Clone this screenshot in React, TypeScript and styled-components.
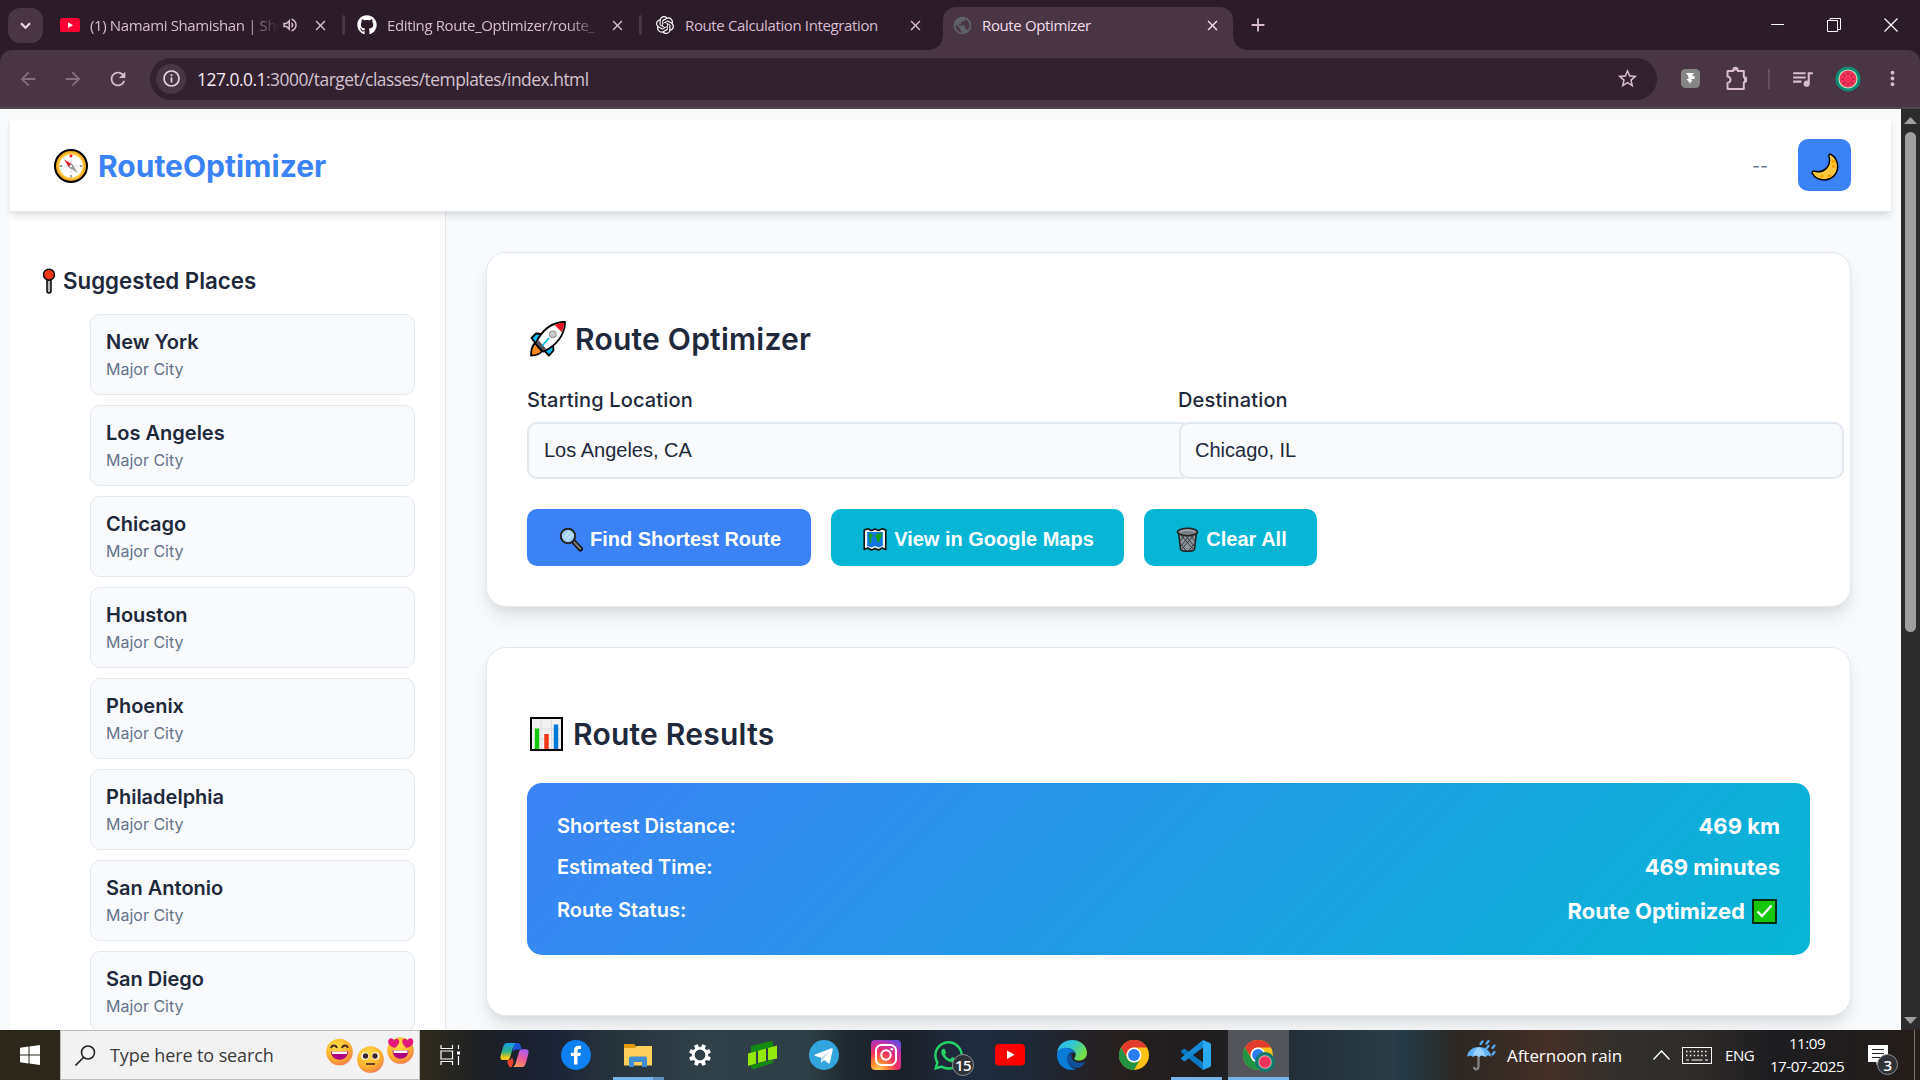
import React from 'react';
import styled, { createGlobalStyle, css } from 'styled-components';
import { FaGithub, FaWhatsapp } from 'react-icons/fa';
import { SiOpenai } from 'react-icons/si';
import {
  MdArrowBack,
  MdArrowForward,
  MdRefresh,
  MdStarBorder,
  MdQueueMusic,
  MdMoreVert,
  MdPublic,
  MdOutlineVolumeUp,
  MdClose,
  MdAdd,
} from 'react-icons/md';

const GlobalStyle = createGlobalStyle`
  * { box-sizing: border-box; }
  html, body { margin: 0; padding: 0; overflow: hidden; background: #f8fafc; }
  button, input { font-family: inherit; margin: 0; }
  svg { display: block; flex: none; }
`;

const inter = css`font-family: Inter, 'Liberation Sans', sans-serif;`;
const ui = css`font-family: 'Open Sans', 'Noto Sans', sans-serif;`;
const arial = css`font-family: 'Liberation Sans', Arial, sans-serif;`;

const Screen = styled.div`
  width: 1920px;
  height: 1080px;
  display: flex;
  flex-direction: column;
  overflow: hidden;
`;

/* ---------- browser chrome ---------- */

const TabStrip = styled.div`
  ${ui}
  height: 50px;
  flex: none;
  display: flex;
  background: #2c1b29;
  color: #d9bcd2;
`;

const TabSearch = styled.div`
  width: 35px;
  height: 35px;
  margin: 8px 5px 0 8px;
  border-radius: 12px;
  background: #4a3545;
  display: flex;
  align-items: center;
  justify-content: center;
`;

const Tab = styled.div`
  width: 297px;
  height: 50px;
  padding-left: 12px;
  display: flex;
  align-items: center;
`;

const ActiveTab = styled(Tab)`
  position: relative;
  width: 290px;
  height: 43px;
  margin: 7px 0 0 4px;
  padding: 0 0 7px 8px;
  border-radius: 13px 13px 0 0;
  background: #4a3545;
  color: #f3dfee;
  &::before,
  &::after {
    content: '';
    position: absolute;
    bottom: 0;
    width: 14px;
    height: 14px;
  }
  &::before {
    left: -14px;
    background: radial-gradient(circle at 0 0, transparent 13.5px, #4a3545 14px);
  }
  &::after {
    right: -14px;
    background: radial-gradient(circle at 100% 0, transparent 13.5px, #4a3545 14px);
  }
`;

const Favicon = styled.div<{ $wide?: boolean }>`
  width: ${p => (p.$wide ? 22 : 20)}px;
  height: 20px;
  margin-right: ${p => (p.$wide ? 9 : 10)}px;
  display: flex;
  align-items: center;
  justify-content: center;
`;

const TabTitle = styled.div<{ $w: number; $fade?: boolean }>`
  width: ${p => p.$w}px;
  font-size: 15px;
  line-height: 24px;
  letter-spacing: -0.37px;
  white-space: nowrap;
  ${p => p.$fade && 'mask-image: linear-gradient(90deg, #000 calc(100% - 34px), transparent);'}
`;

const TabClose = styled.div<{ $ml: number }>`
  margin-left: ${p => p.$ml}px;
  width: 17px;
  height: 17px;
`;

const TabRule = styled.div`
  width: 3px;
  height: 20px;
  border-radius: 2px;
  margin-left: auto;
  background: #4a3545;
`;

const NewTab = styled.div`
  width: 22px;
  margin-left: 14px;
  display: flex;
  align-items: center;
`;

const WindowButtons = styled.div`
  margin-left: auto;
  padding-right: 22px;
  display: flex;
  align-items: center;
  gap: 43px;
`;

const Toolbar = styled.div`
  ${ui}
  height: 59px;
  flex: none;
  background: #2c1b29;
`;

const ToolbarFace = styled.div`
  height: 59px;
  border-radius: 12px 12px 0 0;
  border-bottom: 2px solid #4f4650;
  background: #4a3545;
  color: #d9bcd2;
  display: flex;
  align-items: center;
`;

const NavIcon = styled.div<{ $dim?: boolean; $mr: number }>`
  width: 22px;
  margin-right: ${p => p.$mr}px;
  opacity: ${p => (p.$dim ? 0.42 : 1)};
`;

const Omnibox = styled.div`
  width: 1507px;
  height: 42px;
  border-radius: 21px;
  background: #332130;
  display: flex;
  align-items: center;
  padding: 0 18px 0 6px;
`;

const InfoDot = styled.div`
  width: 30px;
  height: 30px;
  border-radius: 50%;
  background: #4a3545;
  display: flex;
  align-items: center;
  justify-content: center;
`;

const Url = styled.div`
  margin-left: 11px;
  padding-top: 1px;
  flex: 1;
  font-size: 17.4px;
  line-height: 28px;
  letter-spacing: -0.49px;
  color: #d3c4cf;
  span { color: #f6e9f2; }
`;

const ExtRow = styled.div`
  flex: 1;
  display: flex;
  align-items: center;
  padding-left: 24px;
`;

const Gap = styled.div<{ $w: number }>`
  width: ${p => p.$w}px;
`;

const ToolRule = styled.div`
  width: 2px;
  height: 20px;
  background: #66505f;
`;

/* ---------- page ---------- */

const Viewport = styled.div`
  height: 921px;
  flex: none;
  display: flex;
  overflow: hidden;
  background: #f8fafc;
`;

const Page = styled.div`
  ${inter}
  width: 1901px;
  padding: 10px 10px 0;
  color: #1e293b;
`;

const Header = styled.header`
  position: relative;
  z-index: 1;
  height: 93px;
  padding: 0 40px 0 43px;
  background: #fff;
  border-bottom: 1px solid #e2e8f0;
  box-shadow: 0 5px 8px -1px rgba(0, 0, 0, 0.1), 0 2px 5px -1px rgba(0, 0, 0, 0.06);
  display: flex;
  align-items: center;
`;

const Brand = styled.div`
  display: flex;
  align-items: center;
  gap: 9px;
  color: #3b82f6;
  font-size: 30px;
  font-weight: 700;
  line-height: 36px;
  padding-top: 2px;
  flex: 1;
`;

const Eta = styled.div`
  font-size: 17.5px;
  color: #64748b;
  margin-right: 30px;
`;

const ThemeButton = styled.button`
  width: 53px;
  height: 52px;
  padding: 3px 0 0;
  border: 0;
  border-radius: 10px;
  background: #3b82f6;
  display: flex;
  align-items: center;
  justify-content: center;
`;

const Columns = styled.div`
  display: flex;
`;

const Sidebar = styled.aside`
  width: 436px;
  height: 830px;
  padding: 54px 30px 0 32px;
  background: #fff;
  border-right: 1px solid #e2e8f0;
`;

const SideTitle = styled.h3`
  margin: 0 0 18px;
  height: 30px;
  display: flex;
  align-items: center;
  gap: 7px;
  font-size: 22.3px;
  font-weight: 600;
  line-height: 30px;
`;

const PlaceList = styled.ul`
  margin: 0;
  padding: 0 0 0 48px;
  list-style: none;
`;

const Place = styled.li`
  height: 81px;
  margin-bottom: 10px;
  padding: 13px 15px;
  border: 1px solid #e2e8f0;
  border-radius: 10px;
  background: #f8fafc;
`;

const PlaceName = styled.div`
  font-size: 20px;
  font-weight: 600;
  line-height: 28px;
`;

const PlaceKind = styled.div`
  margin-top: 1px;
  font-size: 16px;
  line-height: 24px;
  color: #64748b;
`;

const Main = styled.main`
  padding: 40px 40px 0;
  flex: 1;
`;

const Card = styled.section<{ $h: number }>`
  height: ${p => p.$h}px;
  margin-bottom: 40px;
  padding: 68px 40px 0;
  border: 1px solid #e2e8f0;
  border-radius: 20px;
  background: #fff;
  box-shadow: 0 12px 19px -3px rgba(0, 0, 0, 0.1), 0 5px 8px -2px rgba(0, 0, 0, 0.05);
`;

const CardTitle = styled.h2<{ $gap: number; $mb: number }>`
  margin: 0 0 ${p => p.$mb}px;
  height: 36px;
  display: flex;
  align-items: center;
  gap: ${p => p.$gap}px;
  font-size: 30px;
  font-weight: 600;
  letter-spacing: 0.24px;
  line-height: 36px;
  padding-left: 3px;
`;

const Fields = styled.div`
  display: grid;
  grid-template-columns: 652px 631px;
`;

const FieldLabel = styled.label<{ $shift?: boolean }>`
  display: block;
  height: 30px;
  margin: 0 0 7px ${p => (p.$shift ? -1 : 0)}px;
  font-size: 20px;
  font-weight: 500;
  letter-spacing: 0.15px;
  line-height: 30px;
`;

const FieldInput = styled.input<{ $pl: number }>`
  ${arial}
  display: block;
  width: 665px;
  height: 57px;
  padding: 0 15px 0 ${p => p.$pl}px;
  border: 2px solid #e2e8f0;
  border-radius: 10px;
  background: #f8fafc;
  color: #1e293b;
  font-size: 20px;
`;

const Actions = styled.div`
  margin-top: 30px;
  display: flex;
  gap: 20px;
`;

const Action = styled.button<{ $w: number; $accent?: boolean }>`
  ${arial}
  width: ${p => p.$w}px;
  height: 57px;
  padding: 3px 0 0 2px;
  border: 0;
  border-radius: 10px;
  background: ${p => (p.$accent ? '#06b6d4' : '#3b82f6')};
  color: #fff;
  font-size: 20px;
  font-weight: 600;
  display: flex;
  align-items: center;
  justify-content: center;
  gap: 7px;
`;

const Summary = styled.div`
  height: 172px;
  padding: 22px 30px 0;
  border-radius: 15px;
  background: linear-gradient(135deg, #3b82f6, #06b6d4);
  color: #fff;
`;

const SummaryRow = styled.div<{ $h: number }>`
  height: ${p => p.$h}px;
  display: flex;
  align-items: center;
  justify-content: space-between;
  font-size: 20px;
  font-weight: 600;
`;

const SummaryValue = styled.div<{ $pt?: number }>`
  padding-top: ${p => p.$pt ?? 0}px;
  display: flex;
  align-items: center;
  gap: 7px;
  font-size: 22px;
  font-weight: 700;
`;

const ScrollTrack = styled.div`
  width: 19px;
  background: #2c2c2c;
  display: flex;
  flex-direction: column;
  align-items: center;
  padding: 8px 0 6px;
`;

const ScrollThumb = styled.div`
  width: 11px;
  height: 500px;
  margin: 8px 0 auto;
  border-radius: 6px;
  background: #9f9f9f;
`;

/* ---------- taskbar ---------- */

const Taskbar = styled.div`
  ${ui}
  height: 50px;
  flex: none;
  display: flex;
  color: #fff;
  background: linear-gradient(90deg, #2c271b 0, #302a1d 420px, #1c2025 485px, #1a2236 550px, #26333c 610px, #2f4048 700px, #2d3e46 810px, #1d282e 850px, #1c2029 900px, #1e2c40 970px, #1e2837 1030px, #272020 1110px, #1f1d1e 1210px, #22303b 1300px, #2a3c47 1390px, #243a47 1405px, #2d2722 1460px, #452f27 1550px, #31302c 1620px, #2e2b29 1700px, #1d1c1f 1770px, #201d1c 1870px, #271d19 1920px);
`;

const Cell = styled.div<{ $w?: number; $active?: boolean }>`
  width: ${p => p.$w ?? 62}px;
  height: 50px;
  position: relative;
  display: flex;
  align-items: center;
  justify-content: center;
  ${p => p.$active && 'background: linear-gradient(90deg, transparent 1px, #53555a 1px);'}
`;

const Underline = styled.div<{ $l: number; $w: number; $soft?: boolean }>`
  position: absolute;
  left: ${p => p.$l}px;
  bottom: 0;
  width: ${p => p.$w}px;
  height: 3px;
  background: ${p => (p.$soft ? '#5e8fbd' : '#76b5ec')};
`;

const SearchBox = styled.div`
  width: 360px;
  height: 50px;
  border: 1px solid #bdbdbd;
  background: #f2f2f2;
  color: #3b3b3b;
  display: flex;
  align-items: center;
  padding: 0 4px 0 14px;
`;

const SearchText = styled.div`
  margin-left: 14px;
  width: 217px;
  font-size: 18px;
  letter-spacing: -0.1px;
  white-space: nowrap;
`;

const CountBadge = styled.div<{ $l: number; $t: number; $s: number }>`
  position: absolute;
  left: ${p => p.$l}px;
  top: ${p => p.$t}px;
  width: ${p => p.$s}px;
  height: ${p => p.$s}px;
  border: 1px solid #8c8f92;
  border-radius: 50%;
  background: #2f3337;
  font-size: 15px;
  font-weight: 600;
  letter-spacing: -0.6px;
  display: flex;
  align-items: center;
  justify-content: center;
`;

const Tray = styled.div`
  margin-left: auto;
  display: flex;
  align-items: center;
`;

const Weather = styled.div`
  width: 146px;
  margin-left: 10px;
  font-size: 17px;
  letter-spacing: -0.05px;
  white-space: nowrap;
`;

const Lang = styled.div`
  width: 40px;
  margin-left: 13px;
  font-size: 15px;
  letter-spacing: -0.4px;
`;

const Clock = styled.div`
  width: 84px;
  font-size: 15.2px;
  line-height: 23px;
  letter-spacing: -0.5px;
  text-align: center;
  white-space: nowrap;
`;

const ShowDesktop = styled.div`
  width: 6px;
  height: 50px;
  margin-left: 16px;
  border-left: 1px solid #77706d;
`;

/* ---------- drawings ---------- */

const YouTubeMark = ({ w }: { w: number }) => (
  <svg width={w} height={w * 0.72} viewBox="0 0 30 21.6">
    <rect width="30" height="21.6" rx="4" fill={w > 20 ? '#ff0000' : '#ff0033'} />
    <path d="M12 6.5v8.6l7.600-4.300z" fill="#fff" />
  </svg>
);

const Puzzle = () => (
  <svg width="21" height="25" viewBox="0 0 21 25" fill="none" stroke="currentColor" strokeWidth="2">
    <path d="M1.500 5h5.700c0-4.500 4.600-4.500 4.600 0h6v6.200c3.600 0 3.600 5 0 5V23H1.500v-6c4-1 4-5.500 0-6.500z" strokeLinejoin="round" />
    <path d="M7.200 4.500c0-4 4.600-4 4.600 0zM18 11.400c3 0 3 4.600 0 4.600z" fill="currentColor" stroke="none" />
  </svg>
);

const Compass = () => (
  <svg width="36" height="36" viewBox="0 0 36 36">
    <circle cx="18" cy="18" r="16" fill="#f5a81c" stroke="#000" strokeWidth="2" />
    <circle cx="18" cy="18" r="13.4" fill="#ffc83d" />
    <circle cx="18" cy="18" r="11.6" fill="#fff" />
    <path d="M18 6.6v2.6" stroke="#e81224" strokeWidth="2.6" />
    <path d="M18 27v2.4M6.8 18h2.4M26.8 18h2.4" stroke="#999" strokeWidth="1.8" />
    <path d="M18 11v14M11 18h14" stroke="#ddd" strokeWidth="1" />
    <path d="M11 11.500l8.500 5-3.200 3.200z" fill="#e81224" />
    <path d="M19.500 16.500l5.500 8.500-8.700-5.300z" fill="#9a9a9a" />
    <circle cx="18" cy="18.200" r="1.700" fill="#fff" stroke="#777" strokeWidth="0.800" />
  </svg>
);

const Pin = () => (
  <svg width="14" height="26" viewBox="0 0 14 26">
    <path d="M5 11h4v12a2 2 0 0 1-4 0z" fill="#b8b8b8" stroke="#000" strokeWidth="1.500" />
    <circle cx="7" cy="6.700" r="5.500" fill="#f03a17" stroke="#000" strokeWidth="1.500" />
  </svg>
);

const Rocket = () => (
  <svg width="36" height="36" viewBox="0 0 36 36">
    <g stroke="#000" strokeWidth="1.800" strokeLinejoin="round">
      <path d="M5 22c-3 3-4 7-4 12.500 5 0 8-.8 11-4z" fill="#ff8a1e" />
      <path d="M12 13l-6-.5L1.500 17l5 6.500z" fill="#00bcf2" />
      <path d="M23 23.500l.5 6-4.500 5L13.500 29z" fill="#00bcf2" />
      <path d="M35 1C22 1 12 9 5.500 22.500L13.500 30.500C26 25 35 14 35 1z" fill="#fff" />
    </g>
    <path d="M34.200 1.800c-4 .2-7 1-9.700 2.200l7.400 7.300c1.300-2.900 2.100-6 2.300-9.500z" fill="#e81224" />
    <path d="M6.500 22.500L13.300 29.500l3-1.500-8-9z" fill="#555" />
    <path d="M12 25l7-8" stroke="#00bcf2" strokeWidth="1.800" />
    <circle cx="22.800" cy="13.300" r="3.300" fill="#ccc" stroke="#999" strokeWidth="1.200" />
  </svg>
);

const BarChart = () => (
  <svg width="33" height="34" viewBox="0 0 33 34">
    <rect x="1" y="1" width="31" height="32" fill="#f2f2f2" stroke="#000" strokeWidth="2" />
    <path d="M11 2v30M21.500 2v30M2 12h29M2 22h29" stroke="#ddd" strokeWidth="1" />
    <path d="M7 32V11.500" stroke="#16c60c" strokeWidth="4.500" />
    <path d="M16.500 32V17" stroke="#f03a17" strokeWidth="4.500" />
    <path d="M26 32V7.500" stroke="#0078d7" strokeWidth="4.500" />
  </svg>
);

const Magnifier = () => (
  <svg width="24" height="25" viewBox="0 0 24 25">
    <path d="M14 14l7.500 8" stroke="#111" strokeWidth="5" strokeLinecap="round" />
    <path d="M15 15l6.300 6.800" stroke="#777" strokeWidth="2.200" strokeLinecap="round" />
    <circle cx="9" cy="9" r="7.200" fill="#9fcdf3" stroke="#222" strokeWidth="2" />
    <path d="M5 11l6-6.500M8 13l5.500-6" stroke="#c9e5fb" strokeWidth="1.500" />
  </svg>
);

const WorldMap = () => (
  <svg width="24" height="25" viewBox="0 0 24 25">
    <path d="M1.200 3l3.600-1.200L8.500 3.500 12 2l3.500 1.500 3.700-1.700L22.800 3v19.500L19.200 21l-3.700 2-3.500-1.500L8.500 23l-3.700-2-3.600 1.500z" fill="#f2f2f2" stroke="#111" strokeWidth="1.600" strokeLinejoin="round" />
    <path d="M4.200 5h15.600v14l-4 1.500-3.800-1.500-3.600 1.500-4.200-1.500z" fill="#0f78e0" />
    <path d="M6 7c2-1 4-.2 3.500 2s-2.500 2-1.500 4 .5 2.500-.5 3.500S6 9 6 7zM13.500 7l5-1v4c-1.500 2-2 2-2 4s-2 1.500-2.500-.5.500-2-1-3-.5-2 .5-3.500z" fill="#13a10e" />
  </svg>
);

const Trash = () => (
  <svg width="23" height="25" viewBox="0 0 23 25">
    <path d="M2.500 5l2 17c0 3 14 3 14 0l2-17z" fill="#8d9499" stroke="#222" strokeWidth="1.600" />
    <path d="M5 8l12 14M9 8l9 11M14 8l5 6M18 8L6 22M14 8l-9 11M9 8l-5 6M4.500 17l6 7M18.500 17l-6 7" stroke="#33383c" strokeWidth="1" />
    <ellipse cx="11.500" cy="5" rx="10" ry="3.700" fill="#7b8287" stroke="#222" strokeWidth="1.600" />
    <path d="M4 4.500c4-2 11-2 15 0" stroke="#b8bdc1" strokeWidth="1.200" fill="none" />
  </svg>
);

const CheckMark = () => (
  <svg width="28" height="25" viewBox="0 0 28 25">
    <rect x="1" y="1" width="23" height="23" fill="#16c60c" stroke="#0b1d0b" strokeWidth="1.800" />
    <path d="M5.500 12.500l4.500 4.500L19.500 6.500" fill="none" stroke="#fff" strokeWidth="2.300" />
  </svg>
);

const Moon = () => (
  <svg width="28" height="28" viewBox="0 0 28 28">
    <path d="M19.500 1.200c9 5 9.500 17.500 1.500 23.300C14 29 4.500 27 1.200 20c-.4-1.500 1.200-2.500 3-1.800C12 20.500 20.500 14 18 3.200c-.2-1.500.4-2.400 1.500-2z" fill="#ffc83d" stroke="#000" strokeWidth="1.500" />
    <g fill="#f5a300">
      <circle cx="22.500" cy="8.500" r="1.800" />
      <circle cx="22.500" cy="13" r="1.700" />
      <circle cx="11" cy="23" r="1.600" />
      <circle cx="18.500" cy="23" r="2" />
    </g>
  </svg>
);

const Faces = () => (
  <svg width="90" height="46" viewBox="0 0 90 46">
    <defs>
      <radialGradient id="face" cx="0.4" cy="0.300" r="0.750">
        <stop offset="0" stopColor="#ffdc45" />
        <stop offset="0.600" stopColor="#ffb52e" />
        <stop offset="1" stopColor="#ef7a4c" />
      </radialGradient>
    </defs>
    <circle cx="14.500" cy="20" r="13.300" fill="url(#face)" />
    <path d="M6 16c1-3.500 5-3.500 6 0M17 16c1-3.500 5-3.500 6 0" stroke="#4b2a2a" strokeWidth="2" fill="none" />
    <path d="M6 19.500h17c0 11-17 11-17 0z" fill="#b0007e" />
    <path d="M7 19.500h15v2.500H7z" fill="#fff" />
    <circle cx="45.500" cy="27.500" r="13.300" fill="url(#face)" />
    <circle cx="40" cy="24" r="3.800" fill="#fff" />
    <circle cx="50.500" cy="24" r="3.800" fill="#fff" />
    <circle cx="40.500" cy="24" r="2.700" fill="#402428" />
    <circle cx="50" cy="24" r="2.700" fill="#402428" />
    <path d="M41 32h9" stroke="#5a3030" strokeWidth="1.800" />
    <circle cx="75.500" cy="18.500" r="13.300" fill="url(#face)" />
    <path d="M67.500 18.500h16c0 11-16 11-16 0z" fill="#b0007e" />
    <path d="M68.500 18.500h14v2.500h-14z" fill="#fff" />
    <path d="M70 16c-8-2-8-8-5-9.500 2-.8 3.500.5 4 2 1.200-1.700 3-2.500 4.500-1 2 2.500-.5 6-3.500 8.500zM81.500 16c8-2 8-8 5-9.500-2-.8-3.500.5-4 2-1.200-1.700-3-2.500-4.500-1-2 2.500.5 6 3.500 8.500z" fill="#e5177b" />
  </svg>
);

const TaskView = () => (
  <svg width="20" height="20" viewBox="0 0 20 20" fill="none" stroke="#fff" strokeWidth="1.200">
    <path d="M1 0v3.500h11.500V0M1 20v-3.500h11.500V20M1 6h11.500v8H1zM18.500 0v4M18.500 11v9" />
    <path d="M17 6.500h3v3h-3z" fill="#fff" stroke="none" />
  </svg>
);

const Copilot = () => (
  <svg width="29" height="26" viewBox="0 0 29 26">
    <defs>
      <linearGradient id="cpl" x1="0" y1="0" x2="0" y2="1">
        <stop offset="0" stopColor="#1a9fe8" />
        <stop offset="0.500" stopColor="#2fb38a" />
        <stop offset="0.850" stopColor="#f2c91c" />
      </linearGradient>
      <linearGradient id="cpr" x1="0.600" y1="0" x2="0.300" y2="1">
        <stop offset="0" stopColor="#a95df0" />
        <stop offset="0.500" stopColor="#ee5b9a" />
        <stop offset="1" stopColor="#ff9a5c" />
      </linearGradient>
    </defs>
    <path d="M13 1h4.500c2 0 2.500 1 3 2.500l1.200 4H17c-2.500 0-3.500 1-4 3z" fill="#1b54d4" />
    <path d="M7 1h9c-2 1-2.700 3-3.500 6l-2.500 8.500c-.6 2-1.500 2.500-3.500 2.500H3c-3 0-3-3-2-6L3.500 4C4.200 2 5 1 7 1z" fill="url(#cpl)" />
    <path d="M7.500 18c3 0 4-1 4.600-3l1.500 5-1.600 5H11c-2 0-2.500-1-3.500-4z" fill="#e8442e" />
    <path d="M22 25h-9c2-1 2.500-3 3.300-6L19 10c.6-2 1.500-2.800 3.500-2.800H26c3 0 3 3 2 6L25.500 22c-.7 2-1.500 3-3.500 3z" fill="url(#cpr)" />
  </svg>
);

const Facebook = () => (
  <svg width="30" height="30" viewBox="0 0 30 30">
    <circle cx="15" cy="15" r="15" fill="#0f80f2" />
    <path d="M13 24.500V16H9.800v-3.200H13V10.500c0-3.600 2.200-5.300 7-4.500v3c-2.600-.2-3.500.2-3.500 2v1.800h3.400l-.6 3.200h-2.800v8.500z" fill="#fff" />
  </svg>
);

const Folder = () => (
  <svg width="28" height="24" viewBox="0 0 28 24">
    <path d="M0 1h10l2.500 2.500V6H0z" fill="#e09b0a" />
    <path d="M0 5h11l2-2h15v19.500H0z" fill="#ffd05c" />
    <path d="M5 24V15.500a2 2 0 0 1 2-2h14a2 2 0 0 1 2 2V24h-5v-5h-8v5z" fill="#3f8fd0" />
  </svg>
);

const Gear = () => (
  <svg width="24" height="24" viewBox="-12 -12 24 24">
    {[0, 45, 90, 135, 180, 225, 270, 315].map(a => (
      <rect key={a} x="-2" y="-11" width="4" height="5" rx="0.800" fill="#fff" transform={`rotate(${a + 22.5})`} />
    ))}
    <circle r="6.800" fill="none" stroke="#fff" strokeWidth="2.800" />
  </svg>
);

const GreenBars = () => (
  <svg width="29" height="28" viewBox="0 0 29 28">
    <path d="M3 5l20-5 2 1v5L3 12zM3 24l22-5v3L6 28l-3-1z" fill="#138a10" />
    <path d="M0 12.500l8-2.200v12.200l-8 2.500zM10 9.800l8-2.300v12.500l-8 2zM20 7l9-2.500v13L20 19.500z" fill="#93e80e" />
  </svg>
);

const Telegram = () => (
  <svg width="30" height="30" viewBox="0 0 30 30">
    <circle cx="15" cy="15" r="15" fill="#33a5de" />
    <path d="M5.500 14.800L22.500 8.300c.8-.3 1.500.2 1.200 1.400L20.900 22.500c-.2 1-.8 1.200-1.600.8l-4.300-3.300-2.200 2.200c-.5.400-.8.200-.8-.4l.3-4-6.800-2z" fill="#fff" />
    <path d="M12.500 18l8-7-6.500 8.500-1.700 2.700z" fill="#b8d9ee" />
  </svg>
);

const Instagram = () => (
  <svg width="30" height="30" viewBox="0 0 30 30">
    <defs>
      <radialGradient id="ig" cx="0.250" cy="1" r="1.100">
        <stop offset="0" stopColor="#ffd255" />
        <stop offset="0.250" stopColor="#ff8a35" />
        <stop offset="0.550" stopColor="#f0305f" />
        <stop offset="0.850" stopColor="#b932b0" />
        <stop offset="1" stopColor="#6a4be0" />
      </radialGradient>
    </defs>
    <rect width="30" height="30" rx="4" fill="url(#ig)" />
    <rect x="5" y="5" width="20" height="20" rx="5.500" fill="none" stroke="#fff" strokeWidth="2" />
    <circle cx="15" cy="15" r="4.700" fill="none" stroke="#fff" strokeWidth="2" />
    <circle cx="20.800" cy="9.300" r="1.300" fill="#fff" />
  </svg>
);

const Edge = () => (
  <svg width="30" height="30" viewBox="0 0 30 30">
    <defs>
      <linearGradient id="eg" x1="0" y1="0" x2="1" y2="0.500">
        <stop offset="0" stopColor="#2fb5f0" />
        <stop offset="0.500" stopColor="#32c6d5" />
        <stop offset="1" stopColor="#74e045" />
      </linearGradient>
    </defs>
    <path d="M0 13C1 5 7 0 15 0c9 0 15 6 15 13 0 5-4 7.500-8 7.500-4 0-5.500-1.500-4-3.500 2-3 0-7-5-8.500C8 7.300 2 8.500 0 13z" fill="url(#eg)" />
    <path d="M0 13.500C2 8 8 6.800 13 8.500c3 1 5 3 5.500 5-2-2-6-1.500-7.500 2-2 5 1.500 13 8 13.800C8 32-1 24 0 13.500z" fill="#0a7bd6" />
    <path d="M11 15.500c-3 7 3 13 10 12.500 3-.8 5.500-3 6.800-5.500.3-.8-.3-1-1-.6-5 2.300-11.500 0-12.300-5-.2-1.500 0-2.500.5-3.300-2 .2-3.500.9-4 1.900z" fill="#0f4f9c" />
  </svg>
);

const Chrome = () => (
  <svg width="30" height="30" viewBox="0 0 30 30">
    <circle cx="15" cy="15" r="15" fill="#fbc116" />
    <path d="M2 7.500A15 15 0 0 1 28 7.500H15a7.500 7.500 0 0 0-6.500 11.250z" fill="#e33b2e" />
    <path d="M2 7.500l6.500 11.250A7.500 7.500 0 0 0 21.500 18.750L15 30A15 15 0 0 1 2 7.500z" fill="#229342" />
    <circle cx="15" cy="15" r="7.500" fill="#fff" />
    <circle cx="15" cy="15" r="5.900" fill="#2b7cf0" />
  </svg>
);

const ProfileBadge = styled.div`
  position: absolute;
  left: 28px;
  top: 22px;
  width: 20px;
  height: 20px;
  border-radius: 50%;
  border: 3px solid #107a6c;
  background: radial-gradient(circle, #f0325c 5px, #f58a9a 6px, #48c0a0 7px);
`;

const VsCode = () => (
  <svg width="30" height="30" viewBox="0 0 30 30">
    <path d="M0 11l2.500-2c.5-.3 1-.3 1.500 0L22 22.500V30L.2 12.300c-.4-.4-.5-.9-.2-1.300z" fill="#0a79c4" />
    <path d="M0 19l2.500 2c.5.300 1 .3 1.500 0L22 7.500V0L.2 17.700c-.4.400-.5.900-.2 1.300z" fill="#148ad6" />
    <path d="M22 0l7 3c.6.300 1 .9 1 1.500v21c0 .6-.4 1.200-1 1.500l-7 3z" fill="#2aaaf2" />
  </svg>
);

const Umbrella = () => (
  <svg width="30" height="31" viewBox="0 0 30 31">
    <path d="M11.500 14v12c0 4.500-4.500 4-4.500.8" fill="none" stroke="#858585" strokeWidth="2.300" />
    <path d="M0 17C1 10 6 7 12 7s11 3 12.500 10c-2-2-4.500-2-6 0-2-2-4.500-2-6.300 0-2-2-4.500-2-6.200 0-1.500-1.700-4-1.700-6 0z" fill="#62b3f7" />
    <path d="M6 17c.5-5 2.500-8.500 6-10 3.500 1.500 5.500 5 6.500 10-2-2-4.500-2-6.300 0-2-2-4.500-2-6.200 0z" fill="#98d0ff" />
    <path d="M15.500 1.500l-2 2.700M21.500 1l-2 2.700M21.500 6l-2 2.500M27.500 5.500l-2 2.500M27.500 12l-2 2.500" stroke="#58aef8" strokeWidth="2.200" strokeLinecap="round" />
  </svg>
);

const Keyboard = () => (
  <svg width="30" height="17" viewBox="0 0 30 17" fill="none" stroke="#fff">
    <rect x="0.500" y="0.500" width="29" height="16" />
    <path d="M4 4.500h22M4 8.500h22" strokeWidth="1.300" strokeDasharray="1.500 2.300" />
    <path d="M4 13h3M9.500 13h11M23 13h3" strokeWidth="1.200" />
  </svg>
);

const Watermelon = () => (
  <svg width="26" height="26" viewBox="-13 -13 26 26">
    <circle r="12.500" fill="#0a8d76" />
    <circle r="9.600" fill="#c9e9c4" />
    <circle r="8.500" fill="#f23058" />
    {[0, 45, 90, 135, 180, 225, 270, 315].map(a => (
      <rect key={a} x="-0.500" y="-6.300" width="1" height="1.800" fill="#7c1d35" transform={`rotate(${a})`} />
    ))}
  </svg>
);

const places = ['New York', 'Los Angeles', 'Chicago', 'Houston', 'Phoenix', 'Philadelphia', 'San Antonio', 'San Diego'];

const Close = ({ ml }: { ml: number }) => (
  <TabClose $ml={ml}>
    <MdClose size={17} />
  </TabClose>
);

export default function App() {
  return (
    <Screen>
      <GlobalStyle />
      <TabStrip>
        <TabSearch>
          <svg width="11" height="8" viewBox="0 0 11 8" fill="none" stroke="#f0d8ea" strokeWidth="2.200">
            <path d="M1 1.300l4.500 4.500L10 1.300" />
          </svg>
        </TabSearch>
        <Tab>
          <Favicon><YouTubeMark w={20} /></Favicon>
          <TabTitle $w={189} $fade>(1) Namami Shamishan | Shi</TabTitle>
          <Gap $w={2} />
          <MdOutlineVolumeUp size={18} />
          <Close ml={13} />
          <TabRule />
        </Tab>
        <Tab>
          <Favicon><FaGithub size={20} color="#fff" /></Favicon>
          <TabTitle $w={214} $fade>Editing Route_Optimizer/route_</TabTitle>
          <Close ml={8} />
          <TabRule />
        </Tab>
        <Tab>
          <Favicon $wide><SiOpenai size={18} color="#fff" /></Favicon>
          <TabTitle $w={210}>Route Calculation Integration</TabTitle>
          <Close ml={12} />
        </Tab>
        <ActiveTab>
          <Favicon $wide><MdPublic size={21} color="#5f6368" /></Favicon>
          <TabTitle $w={210}>Route Optimizer</TabTitle>
          <Close ml={12} />
        </ActiveTab>
        <NewTab><MdAdd size={22} /></NewTab>
        <WindowButtons>
          <svg width="13" height="13" viewBox="0 0 13 13"><path d="M0 5.500h13" stroke="#fff" /></svg>
          <svg width="14" height="14" viewBox="0 0 14 14" fill="none" stroke="#fff">
            <path d="M0.500 2.500h10v11h-10zM3 2.500v-2h10.500v11h-3" />
          </svg>
          <svg width="14" height="14" viewBox="0 0 14 14"><path d="M0.500 0.500l13 13M13.500 0.500l-13 13" stroke="#fff" strokeWidth="1.200" /></svg>
        </WindowButtons>
      </TabStrip>

      <Toolbar>
        <ToolbarFace>
          <Gap $w={17} />
          <NavIcon $dim $mr={23}><MdArrowBack size={22} /></NavIcon>
          <NavIcon $dim $mr={23}><MdArrowForward size={22} /></NavIcon>
          <NavIcon $mr={21}><MdRefresh size={22} /></NavIcon>
          <Omnibox>
            <InfoDot>
              <svg width="17" height="17" viewBox="0 0 17 17" fill="none" stroke="#e6d3e0" strokeWidth="1.700">
                <circle cx="8.500" cy="8.500" r="7.500" />
                <path d="M8.500 7.500v5M8.500 4.300v1.900" />
              </svg>
            </InfoDot>
            <Url><span>127.0.0.1</span>:3000/target/classes/templates/index.html</Url>
            <MdStarBorder size={23} />
          </Omnibox>
          <ExtRow>
            <svg width="19" height="19" viewBox="0 0 19 19">
              <rect width="19" height="19" rx="4.500" fill="#858585" />
              <path d="M5 4h8l-2 3h2.500v3H10l1.500 2.500h-2V15L5.500 10h2V7.500z" fill="#fff" />
            </svg>
            <Gap $w={26} />
            <Puzzle />
            <Gap $w={21} />
            <ToolRule />
            <Gap $w={20} />
            <MdQueueMusic size={25} />
            <Gap $w={20} />
            <Watermelon />
            <Gap $w={20} />
            <MdMoreVert size={23} />
          </ExtRow>
        </ToolbarFace>
      </Toolbar>

      <Viewport>
        <Page>
          <Header>
            <Brand><Compass /><span>RouteOptimizer</span></Brand>
            <Eta>--</Eta>
            <ThemeButton><Moon /></ThemeButton>
          </Header>
          <Columns>
            <Sidebar>
              <SideTitle><Pin />Suggested Places</SideTitle>
              <PlaceList>
                {places.map(name => (
                  <Place key={name}>
                    <PlaceName>{name}</PlaceName>
                    <PlaceKind>Major City</PlaceKind>
                  </Place>
                ))}
              </PlaceList>
            </Sidebar>
            <Main>
              <Card $h={355}>
                <CardTitle $gap={9} $mb={28}><Rocket />Route Optimizer</CardTitle>
                <Fields>
                  <div>
                    <FieldLabel>Starting Location</FieldLabel>
                    <FieldInput $pl={15} defaultValue="Los Angeles, CA" />
                  </div>
                  <div>
                    <FieldLabel $shift>Destination</FieldLabel>
                    <FieldInput $pl={14} defaultValue="Chicago, IL" />
                  </div>
                </Fields>
                <Actions>
                  <Action $w={284}><Magnifier />Find Shortest Route</Action>
                  <Action $w={293} $accent><WorldMap />View in Google Maps</Action>
                  <Action $w={173} $accent><Trash />Clear All</Action>
                </Actions>
              </Card>
              <Card $h={369}>
                <CardTitle $gap={10} $mb={31}><BarChart />Route Results</CardTitle>
                <Summary>
                  <SummaryRow $h={41}><span>Shortest Distance:</span><SummaryValue>469 km</SummaryValue></SummaryRow>
                  <SummaryRow $h={41}><span>Estimated Time:</span><SummaryValue>469 minutes</SummaryValue></SummaryRow>
                  <SummaryRow $h={46}><span>Route Status:</span><SummaryValue $pt={2}>Route Optimized<CheckMark /></SummaryValue></SummaryRow>
                </Summary>
              </Card>
            </Main>
          </Columns>
        </Page>
        <ScrollTrack>
          <svg width="13" height="7" viewBox="0 0 13 7"><path d="M6.500 0L13 7H0z" fill="#9f9f9f" /></svg>
          <ScrollThumb />
          <svg width="13" height="7" viewBox="0 0 13 7"><path d="M6.500 7L13 0H0z" fill="#9f9f9f" /></svg>
        </ScrollTrack>
      </Viewport>

      <Taskbar>
        <Cell $w={60}>
          <svg width="20" height="20" viewBox="0 0 20 20" fill="#fff">
            <path d="M0 2.800l8.500-1.200v8H0zM9.500 1.400L20 0v9.600H9.500zM0 10.500h8.500v8L0 17.300zM9.500 10.500H20V20L9.500 18.600z" />
          </svg>
        </Cell>
        <SearchBox>
          <svg width="21" height="21" viewBox="0 0 21 21" fill="none" stroke="#222" strokeWidth="1.600">
            <circle cx="13" cy="7.500" r="6.500" />
            <path d="M8.500 12.500L0.500 20.500" />
          </svg>
          <SearchText>Type here to search</SearchText>
          <Faces />
        </SearchBox>
        <Cell $w={60}><TaskView /></Cell>
        <Gap $w={3} />
        <Cell><Copilot /></Cell>
        <Cell><Facebook /></Cell>
        <Cell><Folder /><Underline $l={6} $w={40} /><Underline $l={46} $w={11} $soft /></Cell>
        <Cell><Gear /></Cell>
        <Cell><GreenBars /></Cell>
        <Cell><Telegram /></Cell>
        <Cell><Instagram /></Cell>
        <Cell><FaWhatsapp size={33} color="#25d366" /><CountBadge $l={35} $t={24} $s={22}>15</CountBadge></Cell>
        <Cell><YouTubeMark w={30} /></Cell>
        <Cell><Edge /></Cell>
        <Cell><Chrome /></Cell>
        <Cell><VsCode /><Underline $l={6} $w={51} /></Cell>
        <Cell $active><Chrome /><ProfileBadge /><Underline $l={1} $w={61} /></Cell>
        <Tray>
          <Umbrella />
          <Weather>Afternoon rain</Weather>
          <svg width="17" height="10" viewBox="0 0 17 10" fill="none" stroke="#fff" strokeWidth="1.400">
            <path d="M0.500 9.500l8-8.500 8 8.500" />
          </svg>
          <Gap $w={12} />
          <Keyboard />
          <Lang>ENG</Lang>
          <Clock>11:09<br />17-07-2025</Clock>
          <Gap $w={19} />
          <Cell $w={30}>
            <svg width="30" height="20" viewBox="0 0 30 20">
              <path d="M0 0h20v17h-8l-3.500 3v-3H0z" fill="#fff" />
              <path d="M4 4.500h12M4 8.500h12M4 12.500h8" stroke="#222" strokeWidth="1.200" />
            </svg>
            <CountBadge $l={9} $t={24} $s={21}>3</CountBadge>
          </Cell>
          <ShowDesktop />
        </Tray>
      </Taskbar>
    </Screen>
  );
}
